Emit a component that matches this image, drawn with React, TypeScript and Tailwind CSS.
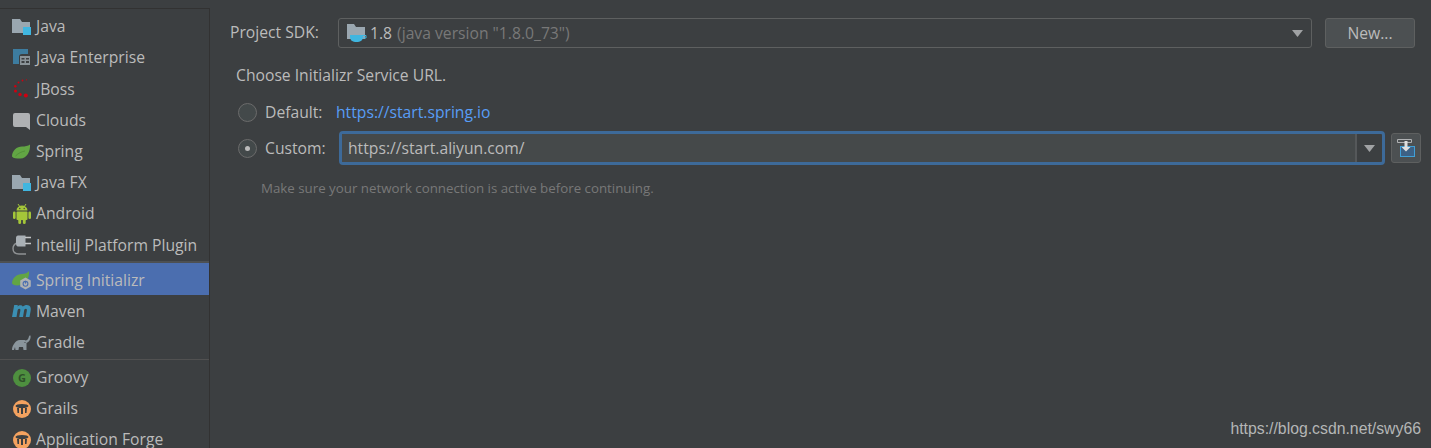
import type { ReactNode } from "react";

const FONT = "font-['Open_Sans','Noto_Sans',sans-serif]";

function JavaIcon() {
  return (
    <svg width="20" height="20" viewBox="0 0 20 20">
      <path d="M0 2h8l2 3h8v11H0z" fill="#9aa7b0" />
      <rect x="11" y="10" width="8" height="8" fill="#40b6e0" />
    </svg>
  );
}

function EnterpriseIcon() {
  return (
    <svg width="20" height="20" viewBox="0 0 20 20">
      <path d="M1 1h15v5h-6a3 3 0 0 0-3 3v7H1z" fill="#3d7c9f" />
      <rect x="8" y="8" width="10" height="9" fill="#8a9398" />
      <path d="M9.500 10h3v1.500h-3zM9.500 13h3v2h-3zM14 10h3v1.500h-3zM14 13h3v2h-3z" fill="#3c3f41" />
    </svg>
  );
}

function JBossIcon() {
  return (
    <svg width="20" height="20" viewBox="0 0 20 20" fill="#cf0010">
      <circle cx="14.500" cy="0.800" r="0.600" />
      <circle cx="10.500" cy="1.500" r="0.900" />
      <circle cx="6.500" cy="3.500" r="1" />
      <circle cx="3.300" cy="7.300" r="1.200" />
      <circle cx="3.500" cy="12" r="1.500" />
      <circle cx="8" cy="15.500" r="1.700" />
      <circle cx="13.800" cy="16.500" r="2" />
    </svg>
  );
}

function CloudsIcon() {
  return (
    <svg width="20" height="20" viewBox="0 0 20 20">
      <path d="M3 2h13a2 2 0 0 1 2 2v15l-4-3H3a2 2 0 0 1-2-2V4a2 2 0 0 1 2-2z" fill="#afb1b3" />
    </svg>
  );
}

function SpringIcon() {
  return (
    <svg width="20" height="20" viewBox="0 0 20 20">
      <path d="M18 2.500c.6 6.500-3 14-9.500 14C4 16.500 1.500 16.500 0 14.500 0 8.500 5 4.500 10 4.500c3 0 6-.5 8-2z" fill="#62a544" />
      <path d="M3.500 14C6.500 11 10 9.500 13 9" stroke="#4f8a36" strokeWidth="0.800" fill="none" />
    </svg>
  );
}

function AndroidIcon() {
  return (
    <svg width="20" height="20" viewBox="0 0 20 20" fill="#a4c639">
      <path d="M4.500 6.500a5.500 5 0 0 1 11 0z" />
      <path d="M6 0l2 3M14 0l-2 3" stroke="#a4c639" strokeWidth="1" />
      <rect x="4.500" y="7.500" width="11" height="8.500" rx="1" />
      <rect x="1" y="7.500" width="2.600" height="7.500" rx="1.300" />
      <rect x="16.400" y="7.500" width="2.600" height="7.500" rx="1.300" />
      <rect x="6.300" y="15" width="2.800" height="5" rx="1.300" />
      <rect x="10.900" y="15" width="2.800" height="5" rx="1.300" />
      <circle cx="7.800" cy="4.500" r="0.700" fill="#3c3f41" />
      <circle cx="12.200" cy="4.500" r="0.700" fill="#3c3f41" />
    </svg>
  );
}

function PluginIcon() {
  return (
    <svg width="20" height="20" viewBox="0 0 20 20" fill="none">
      <path d="M5 8C2.500 9 1 11 1 13.500 1 17 3.500 19 7 19h7" stroke="#8f9294" strokeWidth="1.400" />
      <path d="M6 0.500h7.500v11H6C4.500 11.500 4 10 4 8V3c0-1.500.8-2.500 2-2.500z" fill="#a9b0b5" />
      <path d="M13 2.500h6M13 8.500h6" stroke="#c4c6c8" strokeWidth="1.600" />
    </svg>
  );
}

function InitializrIcon() {
  return (
    <svg width="20" height="20" viewBox="0 0 20 20">
      <path d="M17 0c.6 6-2 12-8 14C4.500 15 1.500 14.500 0 12.500 0 7 5 3 10 3c3 0 5.500-1 7-3z" fill="#62a544" />
      <path d="M13.500 6.500l5.300 3v6l-5.300 3-5.300-3v-6z" fill="#afb1b3" />
      <circle cx="13.500" cy="12.800" r="2.400" fill="none" stroke="#4b6eaf" strokeWidth="1.100" />
      <path d="M13.500 9.800v2.800" stroke="#4b6eaf" strokeWidth="1.100" />
    </svg>
  );
}

function MavenIcon() {
  return (
    <svg width="20" height="20" viewBox="0 0 20 20">
      <path
        d="M0 16L2.200 4h3.600l-.3 1.500C7 4 9.500 3.500 10.800 5.500 12.500 4 15 3.500 17 4.500c2 1 2 3.500 1.600 5.500L17.500 16h-3.800l1.100-6c.2-1.300 0-2.200-1-2.200s-1.600.9-1.800 2.200l-1 6H7.200l1.100-6c.2-1.300 0-2.200-1-2.200S5.700 8.700 5.500 10l-1 6z"
        fill="#3b8fb3"
      />
    </svg>
  );
}

function GradleIcon() {
  return (
    <svg width="20" height="20" viewBox="0 0 20 20">
      <path
        d="M0 17c0-2 .5-4 2-6 1.500-2.500 3.500-4 6-4h3c1 0 1.500-.2 2.500.5 1.500-.2 2.500-1 3-2.500.3-1.200.5-2 1-2.500h1c.3 1.500 0 3.500-1 5-.7 1.300-1.700 2-3 2.500V17h-3l-.5-3H7l-.5 3h-3L3 14l-1 3z"
        fill="#8a959c"
      />
      <circle cx="13" cy="9.500" r="0.600" fill="#3c3f41" />
    </svg>
  );
}

function GroovyIcon() {
  return (
    <svg width="20" height="20" viewBox="0 0 20 20">
      <circle cx="10" cy="10" r="9" fill="#4e8f3f" />
      <text x="10" y="14" textAnchor="middle" fontSize="11" fontWeight="700" fill="#2f4f2a" fontFamily="'Open Sans',sans-serif">
        G
      </text>
    </svg>
  );
}

function GrailsIcon() {
  return (
    <svg width="20" height="20" viewBox="0 0 20 20">
      <circle cx="10" cy="10" r="9" fill="#f4a25f" />
      <ellipse cx="10" cy="7" rx="6.500" ry="2" fill="#3c3f41" />
      <path d="M5 9h2v5H5.500zM9 9h2v6H9zM13 9h2l-.5 5H13z" fill="#3c3f41" />
    </svg>
  );
}

type Item = { label: string; icon: ReactNode; selected?: boolean };

const topItems: Item[] = [
  { label: "Java", icon: <JavaIcon /> },
  { label: "Java Enterprise", icon: <EnterpriseIcon /> },
  { label: "JBoss", icon: <JBossIcon /> },
  { label: "Clouds", icon: <CloudsIcon /> },
  { label: "Spring", icon: <SpringIcon /> },
  { label: "Java FX", icon: <JavaIcon /> },
  { label: "Android", icon: <AndroidIcon /> },
  { label: "IntelliJ Platform Plugin", icon: <PluginIcon /> },
];

const midItems: Item[] = [
  { label: "Maven", icon: <MavenIcon /> },
  { label: "Gradle", icon: <GradleIcon /> },
];

const bottomItems: Item[] = [
  { label: "Groovy", icon: <GroovyIcon /> },
  { label: "Grails", icon: <GrailsIcon /> },
  { label: "Application Forge", icon: <GrailsIcon /> },
];

function Row({ item }: { item: Item }) {
  return (
    <div className={`flex items-center gap-[4px] pl-[12px] text-[15.7px] text-[#bbbbbb] ${item.selected ? "h-[32px] bg-[#4b6eaf] pt-[4px]" : "h-[31.2px]"}`}>
      <span className="flex h-5 w-5 shrink-0 items-center justify-center">{item.icon}</span>
      <span className="whitespace-nowrap">{item.label}</span>
    </div>
  );
}

function Arrow() {
  return (
    <svg width="11" height="7" viewBox="0 0 11 7">
      <path d="M0 0h11L5.500 7z" fill="#a0a2a4" />
    </svg>
  );
}

function Radio({ checked }: { checked?: boolean }) {
  return (
    <span className="flex h-[19px] w-[19px] shrink-0 items-center justify-center rounded-full border border-[#6b6b6b] bg-[#43494a]">
      {checked && <span className="h-[5px] w-[5px] rounded-full bg-[#bbbbbb]" />}
    </span>
  );
}

export default function App() {
  return (
    <div className={`relative flex h-[448px] w-[1431px] overflow-hidden bg-[#3c3f41] ${FONT}`}>
      {/* Project type list */}
      <aside className="mt-[8px] h-[600px] w-[210px] shrink-0 border-t border-r border-[#323232] pt-[2.4px]">
        {topItems.map((item) => (
          <Row key={item.label} item={item} />
        ))}
        <div className="h-[2px] bg-[#4d5052]" />
        <Row item={{ label: "Spring Initializr", icon: <InitializrIcon />, selected: true }} />
        <div className="pt-[1px]">
          {midItems.map((item) => (
            <Row key={item.label} item={item} />
          ))}
        </div>
        <div className="mt-[1px] h-[1px] bg-[#515151]" />
        <div className="pt-[2px]">
          {bottomItems.map((item) => (
            <Row key={item.label} item={item} />
          ))}
        </div>
      </aside>

      {/* Wizard step */}
      <main className="flex-1 pt-[18px] pl-[20px] pr-[10px] text-[15.7px] leading-[20px] text-[#bbbbbb]">
        <div className="mr-[6px] flex h-[30px] items-center">
          <span className="-mt-[2px] w-[108px]">Project SDK:</span>
          <div className="flex h-[30px] flex-1 items-center rounded-[3px] border border-[#5e6060] pl-[8px] pr-[8px]">
            <svg width="20" height="20" viewBox="0 0 20 20">
              <path d="M0 1h7l2 3h9v12H0z" fill="#9aa7b0" />
              <path d="M3 12h13v2a5 5 0 0 1-5 5H8a5 5 0 0 1-5-5z" fill="#40b6e0" />
              <path d="M16 12.500h3v2.500h-3" fill="none" stroke="#40b6e0" />
            </svg>
            <span className="ml-[3px]">1.8</span>
            <span className="ml-[5px] text-[#787878]">(java version "1.8.0_73")</span>
            <span className="ml-auto flex">
              <Arrow />
            </span>
          </div>
          <button className="ml-[13px] h-[30px] w-[90px] rounded-[3px] border border-[#5e6060] bg-[#4c5052] text-center text-[15.7px] text-[#bbbbbb]">New...</button>
        </div>

        <div className="mt-[17px] pl-[6px]">Choose Initializr Service URL.</div>

        <div className="mt-[15px] flex h-[24px] items-center pl-[8px]">
          <Radio />
          <span className="ml-[8px] w-[71px]">Default:</span>
          <a className="text-[#589df6]">https://start.spring.io</a>
        </div>

        <div className="mt-[7px] flex items-center pl-[8px]">
          <Radio checked />
          <span className="ml-[8px] w-[74px]">Custom:</span>
          <div className="flex h-[34px] flex-1 rounded-[4px] border-[3px] border-[#3d6a99]">
            <div className="flex flex-1 items-center bg-[#45494a] pl-[6px] text-[#bbbbbb]">https://start.aliyun.com/</div>
            <div className="flex w-[27px] items-center justify-center border-l-2 border-[#55585a]">
              <Arrow />
            </div>
          </div>
          <button className="ml-[6px] flex h-[30px] w-[30px] items-center justify-center rounded-[3px] border border-[#5e6060] bg-[#4c5052]">
            <svg width="20" height="20" viewBox="0 0 20 20">
              <rect x="4.500" y="8.500" width="14" height="10" fill="#3d6185" stroke="#40a0d8" />
              <path d="M1.500 1.500h14v3h-14z" fill="#4c5052" stroke="#afb1b3" />
              <path d="M8.500 3h3v6h3l-4.500 4.500L5.500 9h3z" fill="#e0e0e0" />
            </svg>
          </button>
        </div>

        <div className="mt-[13px] pl-[31px] text-[13.3px] text-[#787878]">Make sure your network connection is active before continuing.</div>
      </main>

      <span className="absolute right-[10px] bottom-[9px] font-['Liberation_Sans',sans-serif] text-[15.8px] leading-[20px] text-[#b4b6b6]">https://blog.csdn.net/swy66</span>
    </div>
  );
}
